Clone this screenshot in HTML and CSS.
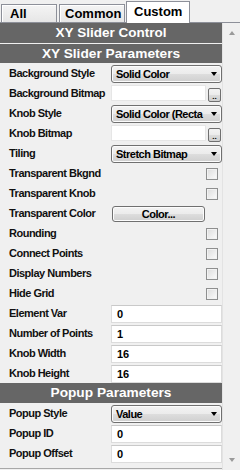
FILE: index.html
```html
<!DOCTYPE html>
<html>
<head>
<meta charset="utf-8">
<link rel="stylesheet" href="styles.css">
</head>
<body>
<div class="panel">
  <div class="tabs">
    <div class="tab tab-all">All</div>
    <div class="tab tab-common">Common</div>
    <div class="tab tab-custom active">Custom</div>
  </div>
  <div class="body">
    <div class="main">
      <div class="hdr hdr-top">XY Slider Control</div>
      <div class="hdr hdr-sub">XY Slider Parameters</div>

      <div class="row"><span class="lbl">Background Style</span><div class="select">Solid Color<span class="arrow"></span></div></div>
      <div class="row"><span class="lbl">Background Bitmap</span><div class="file"><div class="input short"></div><div class="dots">..</div></div></div>
      <div class="row"><span class="lbl">Knob Style</span><div class="select">Solid Color (Recta<span class="arrow"></span></div></div>
      <div class="row"><span class="lbl">Knob Bitmap</span><div class="file"><div class="input short"></div><div class="dots">..</div></div></div>
      <div class="row"><span class="lbl">Tiling</span><div class="select">Stretch Bitmap<span class="arrow"></span></div></div>
      <div class="row"><span class="lbl">Transparent Bkgnd</span><span class="check"></span></div>
      <div class="row"><span class="lbl">Transparent Knob</span><span class="check"></span></div>
      <div class="row"><span class="lbl">Transparent Color</span><div class="btn">Color...</div></div>
      <div class="row"><span class="lbl">Rounding</span><span class="check"></span></div>
      <div class="row"><span class="lbl">Connect Points</span><span class="check"></span></div>
      <div class="row"><span class="lbl">Display Numbers</span><span class="check"></span></div>
      <div class="row"><span class="lbl">Hide Grid</span><span class="check"></span></div>
      <div class="row"><span class="lbl">Element Var</span><div class="input">0</div></div>
      <div class="row"><span class="lbl">Number of Points</span><div class="input">1</div></div>
      <div class="row"><span class="lbl">Knob Width</span><div class="input">16</div></div>
      <div class="row"><span class="lbl">Knob Height</span><div class="input">16</div></div>

      <div class="hdr hdr-popup">Popup Parameters</div>
      <div class="row"><span class="lbl">Popup Style</span><div class="select">Value<span class="arrow"></span></div></div>
      <div class="row"><span class="lbl">Popup ID</span><div class="input">0</div></div>
      <div class="row"><span class="lbl">Popup Offset</span><div class="input">0</div></div>
    </div>
    <div class="scroll">
      <span class="sarrow up"></span>
      <span class="sarrow down"></span>
    </div>
  </div>
</div>
</body>
</html>
```
FILE: styles.css
```css
html, body {
  margin: 0;
  padding: 0;
  background: #f0f0f0;
}
.panel {
  width: 240px;
  height: 470px;
  background: #f0f0f0;
  display: flex;
  flex-direction: column;
  font-family: "Liberation Sans", Arial, sans-serif;
  overflow: hidden;
}
.tabs {
  height: 23px;
  box-sizing: border-box;
  display: flex;
  align-items: flex-end;
  gap: 1px;
  padding-left: 1px;
  border-bottom: 1px solid #8d9099;
  flex: none;
}
.tab {
  box-sizing: border-box;
  height: 18px;
  border: 1px solid #8d9099;
  border-bottom: none;
  background: linear-gradient(#f4f4f4, #e6e6e6);
  box-shadow: inset 1px 1px 0 #ffffff;
  font-weight: bold;
  font-size: 13px;
  line-height: 18px;
  color: #000;
}
.tab-all { width: 56px; padding-left: 8px; }
.tab-common { width: 66px; padding-left: 5px; margin-left: 1px; }
.tab-custom { width: 64px; padding-left: 7px; }
.tab.active {
  height: 22px;
  margin-bottom: -1px;
  background: #ffffff;
  box-shadow: none;
  line-height: 20px;
}
.body {
  flex: 1;
  display: flex;
  min-height: 0;
}
.main {
  width: 222px;
  flex: none;
  display: flex;
  flex-direction: column;
  border-bottom: 1px solid #a8a8a8;
  box-sizing: border-box;
  height: 446px;
}
.hdr {
  background: #666666;
  color: #ffffff;
  font-weight: bold;
  text-align: center;
  height: 20px;
  line-height: 20px;
  flex: none;
}
.hdr-top {
  font-size: 13.5px;
}
.hdr-sub {
  margin-top: 1px;
  height: 19px;
  line-height: 19px;
  font-size: 13.7px;
}
.hdr-popup {
  font-size: 13.7px;
}
.row {
  height: 20px;
  flex: none;
  display: flex;
  align-items: center;
}
.lbl {
  width: 111px;
  flex: none;
  box-sizing: border-box;
  padding-left: 9px;
  font-size: 11px;
  letter-spacing: -0.5px;
  font-weight: bold;
  color: #111;
  white-space: nowrap;
}
.select {
  box-sizing: border-box;
  width: 111px;
  height: 18px;
  margin-top: 1px;
  border: 1px solid #707070;
  border-radius: 3px;
  background: linear-gradient(#f3f3f3 0%, #ebebeb 50%, #dddddd 51%, #cfcfcf 100%);
  box-shadow: inset 0 0 0 1px #fcfcfc;
  font-size: 11px;
  letter-spacing: -0.5px;
  font-weight: bold;
  color: #000;
  padding-left: 4px;
  display: flex;
  align-items: center;
  overflow: hidden;
  white-space: nowrap;
  position: relative;
}
.arrow {
  position: absolute;
  right: 4px;
  top: 6px;
  width: 0;
  height: 0;
  border-left: 3.5px solid transparent;
  border-right: 3.5px solid transparent;
  border-top: 4px solid #000;
}
.input {
  box-sizing: border-box;
  width: 111px;
  height: 18px;
  margin-top: 1px;
  background: #ffffff;
  border: 1px solid #dcdcdc;
  border-top-color: #c9c9c9;
  font-size: 11px;
  font-weight: bold;
  color: #000;
  padding-left: 5px;
  display: flex;
  align-items: center;
}
.file {
  display: flex;
  align-items: flex-start;
  gap: 2px;
  height: 20px;
}
.input.short {
  width: 95px;
  height: 16px;
  margin-top: 2px;
  border-color: #e6e6e6;
}
.dots {
  box-sizing: border-box;
  width: 13px;
  height: 14px;
  margin-top: 5px;
  border: 1px solid #707070;
  border-radius: 2px;
  background: linear-gradient(#f3f3f3 0%, #ebebeb 50%, #dddddd 51%, #cfcfcf 100%);
  font-size: 8px;
  font-weight: bold;
  line-height: 16px;
  text-align: center;
  color: #000;
}
.check {
  box-sizing: border-box;
  width: 12px;
  height: 12px;
  margin-left: 95px;
  margin-top: 1px;
  border: 1px solid #8e8f8f;
  background: linear-gradient(135deg, #dcdcdc, #fcfcfc);
  box-shadow: inset 0 0 0 1px #f2f2f2;
}
.btn {
  box-sizing: border-box;
  width: 93px;
  height: 16px;
  margin-left: 1px;
  margin-top: 1px;
  border: 1px solid #707070;
  border-radius: 3px;
  background: linear-gradient(#f3f3f3 0%, #ebebeb 50%, #dddddd 51%, #cfcfcf 100%);
  box-shadow: inset 0 0 0 1px #fcfcfc;
  font-size: 11px;
  letter-spacing: -0.5px;
  font-weight: bold;
  color: #000;
  text-align: center;
  line-height: 14px;
}
.scroll {
  flex: 1;
  border-left: 1px solid #e3e3e3;
  background: #f0f0f0;
  display: flex;
  flex-direction: column;
  justify-content: space-between;
  align-items: center;
  padding: 8px 0 8px 0;
}
.sarrow {
  width: 0;
  height: 0;
  border-left: 3.5px solid transparent;
  border-right: 3.5px solid transparent;
}
.sarrow.up {
  border-bottom: 4px solid #9a9a9a;
}
.sarrow.down {
  border-top: 4px solid #9a9a9a;
}
```
